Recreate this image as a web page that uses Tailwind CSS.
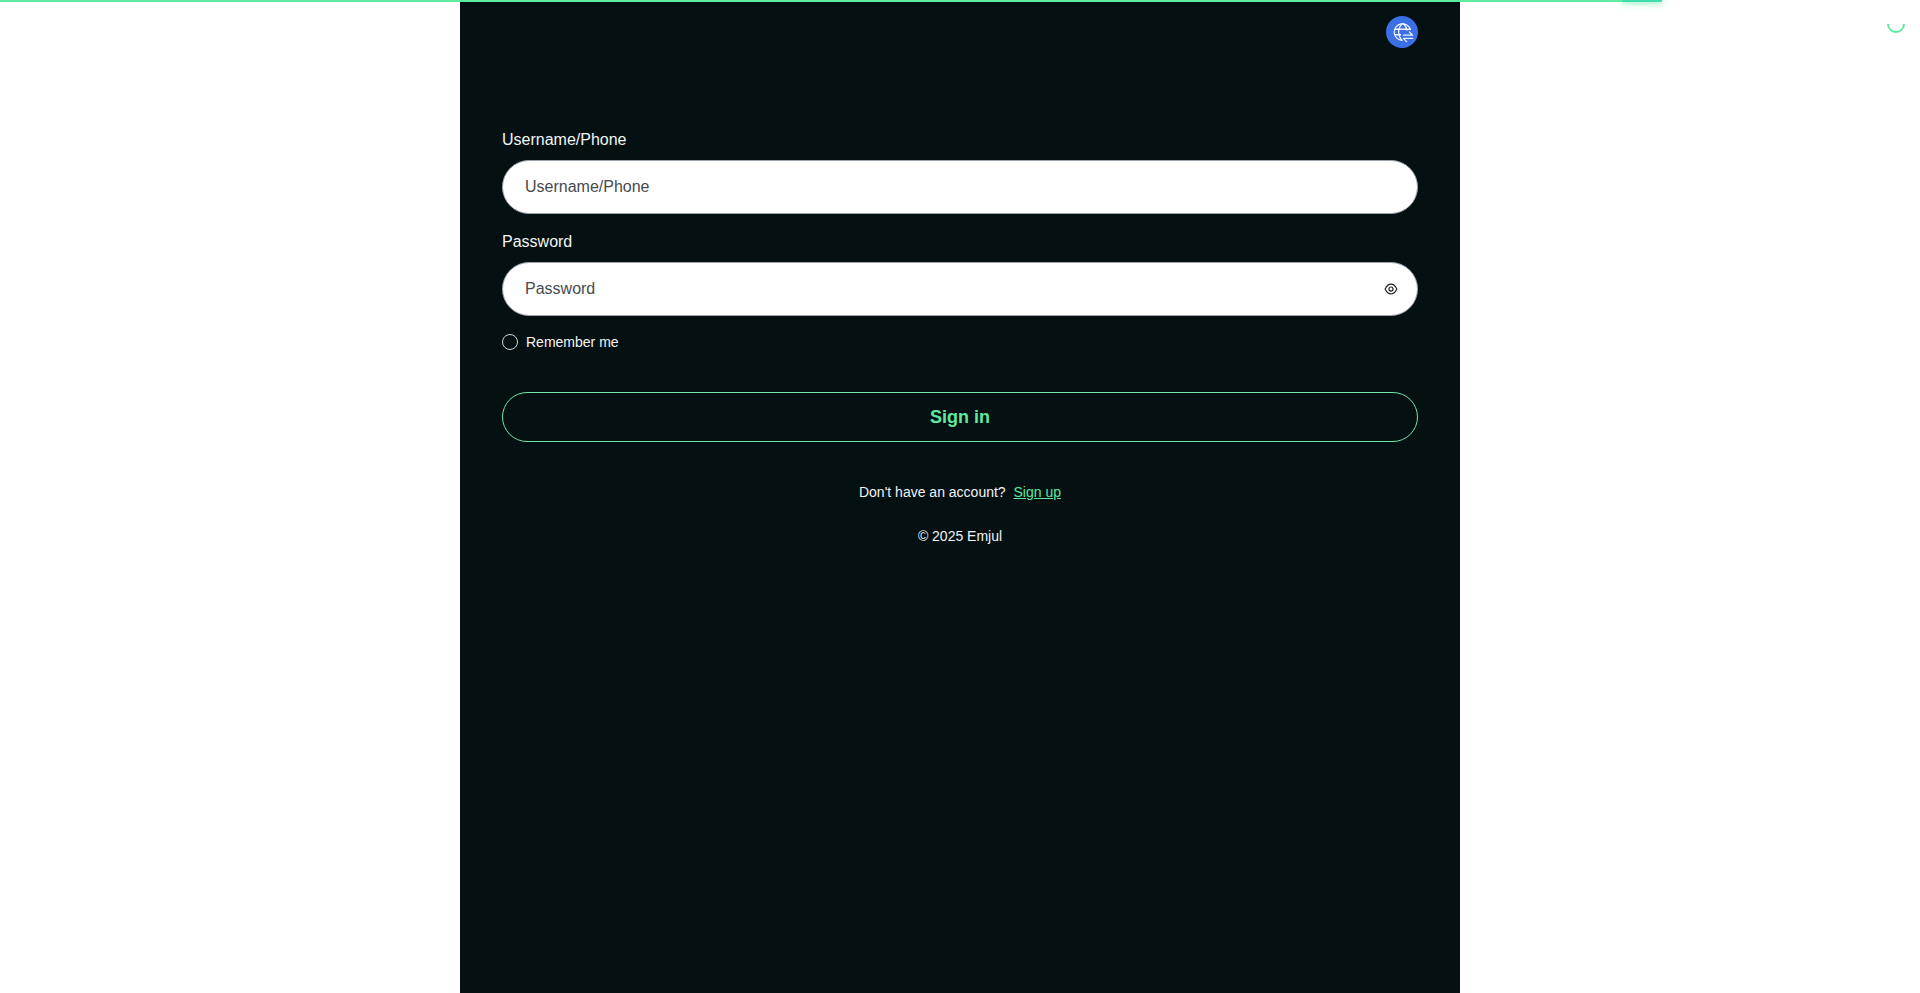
<!DOCTYPE html>
<html lang="en">
<head>
    <meta charset="UTF-8">
    <meta name="viewport" content="width=device-width, initial-scale=1.0">
    <title>Sign in</title>
    <script src="https://cdn.jsdelivr.net/npm/@tailwindcss/browser@4"></script>
</head>
<body class="bg-white h-screen overflow-hidden font-['Liberation_Sans',Arial,sans-serif]">
    <!-- page load bar and spinner -->
    <div class="fixed top-0 left-0 h-[2px] w-[1662px] bg-[#5eeaa0] z-10">
        <div class="absolute right-0 top-0 h-[2px] w-[40px] bg-[#3fdcb0] shadow-[0_0_10px_#5eeaa0,0_0_5px_#5eeaa0]"></div>
    </div>
    <div class="fixed top-[15px] right-[15px] w-[18px] h-[18px] rounded-full border-2 border-transparent border-b-[#5eeaa0] border-l-[#5eeaa0] -rotate-45 z-10"></div>

    <main class="mx-auto w-[1000px] h-full bg-[#051013] px-[42px] pt-4 text-white">
        <div class="flex justify-end">
            <button type="button" class="w-8 h-8 rounded-full bg-[#3b6fe6] flex items-center justify-center text-white/90">
                <svg class="w-[22px] h-[22px] translate-x-px" viewBox="0 0 24 24" fill="none" stroke="currentColor" stroke-width="1.400" stroke-linecap="round" stroke-linejoin="round">
                    <path d="M20 9.500A9 9 0 1 0 10.500 21"/>
                    <path d="M3.500 9h16.500M3.500 15h6"/>
                    <path d="M11 3c-5 5-5 13 0 18M12.500 3c2.300 2.300 3.500 4.500 3.800 7"/>
                    <path d="M12.500 15.500h10l-3.500-3.500M22.500 19h-10l3.500 3.500"/>
                </svg>
            </button>
        </div>

        <form class="mt-[80px]">
            <label class="block text-base leading-6 text-[#f3f5f5]">Username/Phone</label>
            <input type="text" placeholder="Username/Phone" class="mt-[8px] block w-full h-[54px] px-[22px] rounded-[27px] bg-white border border-[#9ca3af] text-base placeholder:text-[#474a4f] outline-none">

            <label class="block mt-4 text-base leading-6 text-[#f3f5f5]">Password</label>
            <div class="relative mt-[8px]">
                <input type="password" placeholder="Password" class="block w-full h-[54px] px-[22px] rounded-[27px] bg-white border border-[#9ca3af] text-base placeholder:text-[#474a4f] outline-none">
                <svg class="absolute right-[20px] top-[20px] w-[14px] h-[14px] text-[#1a1f24]" viewBox="0 0 24 24" fill="none" stroke="currentColor" stroke-width="2">
                    <path d="M2 12C4.500 6.500 8 3.500 12 3.500S19.500 6.500 22 12C19.500 17.500 16 20.500 12 20.500S4.500 17.500 2 12Z"/>
                    <circle cx="12" cy="12" r="3.500"/>
                </svg>
            </div>

            <label class="flex items-center mt-4 h-[20px] text-sm text-[#f3f5f5]">
                <span class="w-4 h-4 rounded-full border border-gray-300"></span>
                <span class="ml-2">Remember me</span>
            </label>

            <button type="button" class="mt-10 block w-full h-[50px] rounded-[25px] border border-[#6ee7a8] text-[#5ee89d] text-lg font-bold">Sign in</button>
        </form>

        <p class="mt-10 text-sm leading-5 text-center text-[#f0f3f3]">Don't have an account? <a href="#" class="ml-1 text-[#5ee89d] underline">Sign up</a></p>
        <p class="mt-6 text-sm leading-5 text-center text-[#f0f3f3]">© 2025 Emjul</p>
    </main>
</body>
</html>
